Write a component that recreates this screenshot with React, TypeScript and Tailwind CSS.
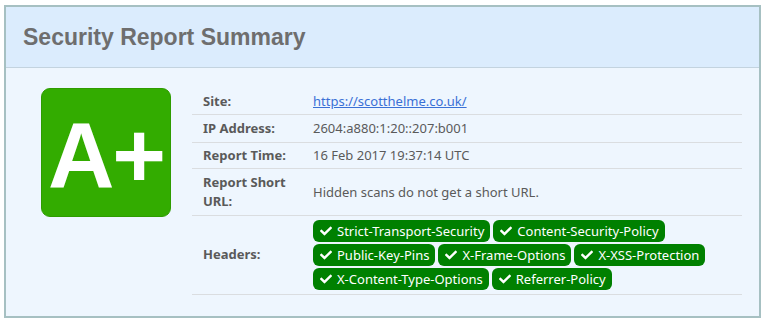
import { FaCheck } from "react-icons/fa";

const rows = [
  { label: "Site:", value: <a href="#" className="text-[#3a70d6] underline">https://scotthelme.co.uk/</a>, h: "h-[27px]" },
  { label: "IP Address:", value: "2604:a880:1:20::207:b001", h: "h-[28px]" },
  { label: "Report Time:", value: "16 Feb 2017 19:37:14 UTC", h: "h-[26px]" },
  { label: "Report Short URL:", value: "Hidden scans do not get a short URL.", h: "h-[47px]" },
];

const headers = [
  "Strict-Transport-Security",
  "Content-Security-Policy",
  "Public-Key-Pins",
  "X-Frame-Options",
  "X-XSS-Protection",
  "X-Content-Type-Options",
  "Referrer-Policy",
];

export default function App() {
  return (
    <div className="bg-white w-[765px] h-[322px] pt-[5px] pl-[4px]">
      <div className="w-[757px] border-2 border-[#a6c0c2] bg-[#eef6fe]">
        <div className="h-[61px] bg-[#dbecfd] border-b border-[#c3d3df] pl-[17px] flex items-center">
          <h1 className="text-[23px] font-bold text-[#6e6e6e] font-['Liberation_Sans',Arial,sans-serif]">
            Security Report Summary
          </h1>
        </div>
        <div className="flex pt-[20px] pl-[35px] pr-[17px] pb-[21px] font-['Noto_Sans',sans-serif] text-[13px] text-[#5a5a5a]">
          <div className="w-[130px] h-[129px] shrink-0 rounded-[9px] bg-[#33ac00] border border-[#2e9c00] flex items-center justify-center">
            <span className="text-white font-bold text-[92px] leading-none font-['Liberation_Sans',Arial,sans-serif] tracking-[-2px] mt-[4px]">
              A+
            </span>
          </div>
          <div className="flex-1 ml-[21px]">
            {rows.map((r) => (
              <div key={r.label} className={`flex border-b border-[#dadde0] ${r.h}`}>
                <div className="w-[121px] shrink-0 pl-[11px] pr-[14px] font-bold leading-[19px] flex items-center">
                  {r.label}
                </div>
                <div className="flex-1 leading-[19px] flex items-center">{r.value}</div>
              </div>
            ))}
            <div className="flex h-[79px] border-b border-[#dadde0]">
              <div className="w-[121px] shrink-0 pl-[11px] font-bold flex items-center">Headers:</div>
              <div className="flex-1 flex flex-wrap content-start gap-x-[3px] gap-y-[2px] pt-[4px] pr-[20px]">
                {headers.map((h) => (
                  <span
                    key={h}
                    className="h-[22px] rounded-[6px] bg-[#008000] text-white font-normal flex items-center gap-[5px] pl-[7px] pr-[6px] leading-none"
                  >
                    <FaCheck className="w-[12px] h-[12px]" />
                    {h}
                  </span>
                ))}
              </div>
            </div>
          </div>
        </div>
      </div>
    </div>
  );
}
